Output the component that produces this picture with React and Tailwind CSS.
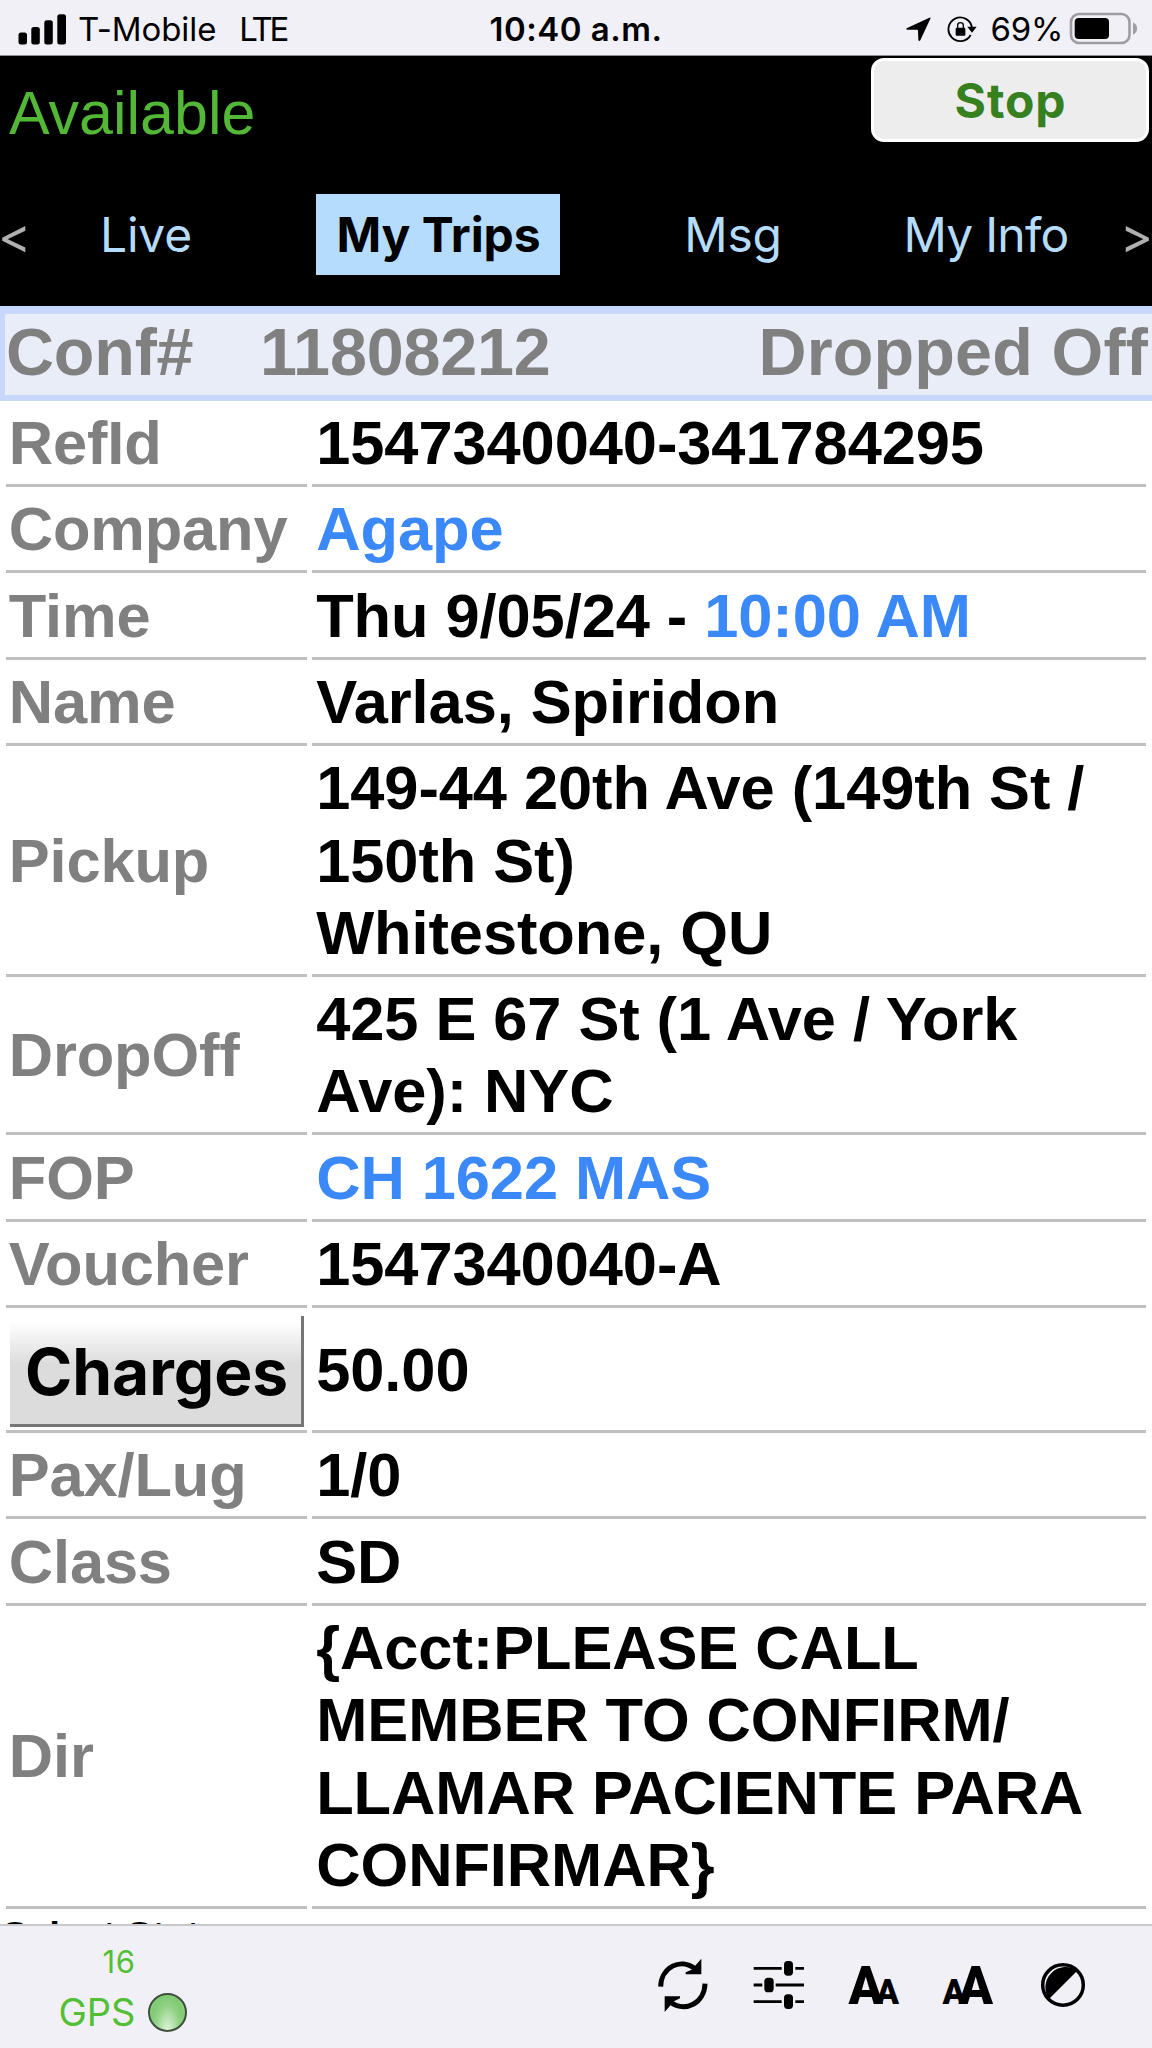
const tabs = ["Live", "My Trips", "Msg", "My Info"];

const trip = [
  { label: "RefId", value: "1547340040-341784295" },
  { label: "Company", value: "Agape", link: true },
  { label: "Time", value: "Thu 9/05/24 - ", extra: "10:00 AM" },
  { label: "Name", value: "Varlas, Spiridon" },
  {
    label: "Pickup",
    value: "149-44 20th Ave (149th St /\n150th St)\nWhitestone, QU",
  },
  { label: "DropOff", value: "425 E 67 St (1 Ave / York\nAve): NYC" },
  { label: "FOP", value: "CH 1622 MAS", link: true },
  { label: "Voucher", value: "1547340040-A" },
  { label: "Charges", value: "50.00", button: true },
  { label: "Pax/Lug", value: "1/0" },
  { label: "Class", value: "SD" },
  {
    label: "Dir",
    value:
      "{Acct:PLEASE CALL\nMEMBER TO CONFIRM/\nLLAMAR PACIENTE PARA\nCONFIRMAR}",
  },
];

function SignalIcon() {
  return (
    <svg className="h-[31px] w-[49px]" viewBox="0 0 49 31">
      <rect x="0.5" y="18.5" width="8.5" height="12" rx="2.5" />
      <rect x="13.3" y="13" width="8.5" height="17.5" rx="2.5" />
      <rect x="26.3" y="6.3" width="8.5" height="24.2" rx="2.5" />
      <rect x="39.3" y="0.3" width="8.7" height="30.2" rx="2.5" />
    </svg>
  );
}

function LocationIcon() {
  return (
    <svg className="h-[25px] w-[25px]" viewBox="74 50 75 75">
      <path d="M76 84 L144 52 Q149 50 147 55 L117 120 Q113 125 111 119 L110 91 Q110 88 107 88 L78 88 Q73 87 76 84 Z" />
    </svg>
  );
}

function RotationLockIcon() {
  return (
    <svg className="h-[28px] w-[30px]" viewBox="200 46 90 84">
      <path
        d="M275 84 A35.5 35.5 0 1 0 271 106"
        fill="none"
        stroke="black"
        strokeWidth="5.5"
      />
      <path d="M261 81 H289 L275 99 Z" />
      <rect x="226" y="84" width="29" height="24" rx="3" />
      <path
        d="M232 86 V77 Q232 69 240 69 Q249 69 249 77 V86"
        fill="none"
        stroke="black"
        strokeWidth="4"
      />
    </svg>
  );
}

function BatteryIcon() {
  return (
    <svg className="h-[33px] w-[69px]" viewBox="0 0 69 33">
      <rect
        x="2"
        y="2"
        width="58.5"
        height="29"
        rx="8"
        fill="none"
        stroke="#9d9da1"
        strokeWidth="2.6"
      />
      <rect x="5.7" y="6" width="34.3" height="21" rx="4" />
      <path d="M64 10.5 Q68 12 68 16.5 Q68 21 64 22.5 Z" fill="#9d9da1" />
    </svg>
  );
}

function RefreshIcon() {
  return (
    <svg className="h-[56px] w-[52px]" viewBox="52 52 156 168">
      <g fill="none" stroke="black" strokeWidth="15">
        <path d="M63 141 C64 84 122 51 168 89" />
        <path d="M196 132 C195 189 137 222 91 186" />
      </g>
      <path d="M185 57 V104 H138 V98 L156 90 Z" />
      <path d="M75 217 V170 H121 V176 L103 185 Z" />
    </svg>
  );
}

function SlidersIcon() {
  return (
    <svg className="h-[50px] w-[52px]" viewBox="340 58 156 150">
      <path
        d="M342 83 H426 M467 83 H493 M342 133 H368 M408 133 H493 M342 183 H426 M467 183 H493"
        stroke="black"
        strokeWidth="8.5"
      />
      <rect x="433" y="61" width="27" height="44" rx="11" />
      <rect x="374" y="111" width="28" height="44" rx="11" />
      <rect x="433" y="161" width="27" height="44" rx="11" />
    </svg>
  );
}

function TextSizeIcon({ grow }) {
  return (
    <svg
      className="h-[42px] w-[52px] overflow-visible font-['Roboto',sans-serif] font-black"
      viewBox="0 0 52 42"
    >
      <text
        x={grow ? 16.5 : 0.5}
        y="39.5"
        fontSize="54"
        textLength="34.5"
        lengthAdjust="spacingAndGlyphs"
      >
        A
      </text>
      <text
        x={grow ? 0.5 : 28}
        y="39.5"
        fontSize="35"
        textLength="23"
        lengthAdjust="spacingAndGlyphs"
      >
        A
      </text>
    </svg>
  );
}

function ContrastIcon() {
  return (
    <svg className="h-[46px] w-[46px]" viewBox="0 0 46 46">
      <circle
        cx="23"
        cy="23"
        r="20.3"
        fill="none"
        stroke="black"
        strokeWidth="3.5"
      />
      <path d="M9 37 A20.5 20.5 0 0 1 37.5 8.5 Z" />
    </svg>
  );
}

function StatusBar() {
  return (
    <div className="grid h-[56px] shrink-0 grid-cols-[1fr_auto_1fr] items-center border-b border-[#8e8e90] bg-[#f1f0f6] pt-[3px] font-['Inter',sans-serif] text-[33px] leading-none">
      <div className="flex items-center pl-[18px]">
        <SignalIcon />
        <span className="ml-[11px] tracking-[-0.1px]">T-Mobile</span>
        <span className="ml-[23px] tracking-[-3.3px]">LTE</span>
      </div>
      <span className="font-semibold tracking-[0.5px]">10:40 a.m.</span>
      <div className="flex items-center justify-end pr-[14px]">
        <LocationIcon />
        <span className="ml-[16px]">
          <RotationLockIcon />
        </span>
        <span className="ml-[14px] tracking-[-0.3px]">69%</span>
        <span className="-mt-[2px] ml-[6px]">
          <BatteryIcon />
        </span>
      </div>
    </div>
  );
}

function Header() {
  return (
    <div className="h-[250px] shrink-0 bg-black">
      <div className="flex h-[112px] items-center justify-between pr-[3px] pl-[8px]">
        <span className="pt-[2px] pl-[1px] text-[61px] leading-none text-[#52b835]">
          Available
        </span>
        <button className="mt-[2px] h-[84px] w-[278px] self-start rounded-[13px] border-[3px] border-white bg-[#ededed] pt-[2px] pl-[1px] font-['Inter',sans-serif] text-[48px] leading-none font-bold tracking-[0.9px] text-[#37801f]">
          Stop
        </button>
      </div>
      <div className="grid grid-cols-[28px_236px_348px_242px_264px_34px] items-center pt-[26px] font-['Inter',sans-serif] text-[48px] leading-none text-[#b5dcfd]">
        <span className="-ml-[2px] text-[50px] text-[#b0b0b0]">&lt;</span>
        {tabs.map((tab) => (
          <span
            key={tab}
            className={
              tab === "My Trips"
                ? "flex h-[81px] w-[244px] items-center justify-center justify-self-center bg-[#b5dcfd] pl-[1px] font-bold tracking-[-0.1px] text-black"
                : tab === "My Info"
                  ? "text-center tracking-[-0.8px]"
                  : "text-center tracking-[-0.2px]"
            }
          >
            {tab}
          </span>
        ))}
        <span className="ml-[2px] text-[50px] text-[#b0b0b0]">&gt;</span>
      </div>
    </div>
  );
}

function TripRow({ row }) {
  const color = row.link ? "text-[#3b88f8]" : "text-black";

  return (
    <div className="grid grid-cols-[301.5px_834.2px] gap-x-[5.3px] pl-[5.5px] text-[61.4px] leading-[72.25px] font-bold">
      {row.button ? (
        <div className="flex justify-end border-b-[3px] border-[#c0c0c0] pt-[8px] pr-[3px] pb-[3px]">
          <button className="h-[111px] w-[294px] border-t-0 border-r-[3px] border-b-[3px] border-l-0 border-[#767676] bg-linear-to-b from-white from-5% to-[#dcdcdc] to-45% pt-[5px] pl-[2px] font-['Inter',sans-serif] text-[64px] leading-none">
            {row.label}
          </button>
        </div>
      ) : (
        <div className="flex items-center border-b-[3px] border-[#c0c0c0] pt-[6.4px] pb-[4.7px] pl-[3.3px] tracking-[-0.15px] text-[#808080]">
          {row.label}
        </div>
      )}
      <div
        className={`flex items-center border-b-[3px] border-[#c0c0c0] pt-[6.4px] pb-[4.7px] pl-[3.9px] tracking-[-0.07px] ${color}`}
      >
        <span className="whitespace-pre">
          {row.value}
          {row.extra && <span className="text-[#3b88f8]">{row.extra}</span>}
        </span>
      </div>
    </div>
  );
}

function Footer() {
  return (
    <div className="flex h-[124px] shrink-0 items-start justify-between border-t-2 border-[#c9c9cc] bg-[#f1f0f6] font-['Inter',sans-serif] leading-none text-[#52bf35]">
      <div className="flex items-end pt-[20px] pl-[58.5px]">
        <div className="flex flex-col items-end">
          <span className="text-[31px] tracking-[0.6px]">16</span>
          <span className="mt-[16px] text-[38px]">GPS</span>
        </div>
        <span className="mb-[-1px] ml-[12px] h-[39px] w-[39px] rounded-full border-[2.5px] border-[#3f4f3d] bg-[radial-gradient(ellipse_at_50%_100%,#def5d8_0%,#90d184_50%,#7fcb72_70%,#a6dc9c_100%)]" />
      </div>
      <div className="flex items-center pt-[31px] pr-[66px] text-black">
        <RefreshIcon />
        <span className="ml-[44px]">
          <SlidersIcon />
        </span>
        <span className="ml-[43px]">
          <TextSizeIcon />
        </span>
        <span className="ml-[42px]">
          <TextSizeIcon grow />
        </span>
        <span className="ml-[46px]">
          <ContrastIcon />
        </span>
      </div>
    </div>
  );
}

export default function App() {
  return (
    <div className="flex h-[2048px] w-[1152px] flex-col overflow-hidden bg-white font-['Liberation_Sans',Arial,sans-serif]">
      <StatusBar />
      <Header />
      <div className="min-h-0 flex-1 overflow-hidden">
        <div className="border-t border-[#b5dcfd]">
          <div className="flex h-[93.6px] items-center border-t-[7px] border-b-[6px] border-l-[5px] border-[#c8d8fc] bg-[#e8edf7] pr-[4px] pb-[4px] text-[66.5px] leading-none font-bold text-[#808080]">
            <span className="w-[255px] pl-[1px] tracking-[-0.2px]">Conf#</span>
            <span className="tracking-[-0.2px]">11808212</span>
            <span className="ml-auto tracking-[0.15px]">Dropped Off</span>
          </div>
        </div>
        {trip.map((row) => (
          <TripRow key={row.label} row={row} />
        ))}
        <p className="pt-[5px] pl-[2px] text-[38.6px] leading-[44px] font-bold">
          Select Status
        </p>
      </div>
      <Footer />
    </div>
  );
}
